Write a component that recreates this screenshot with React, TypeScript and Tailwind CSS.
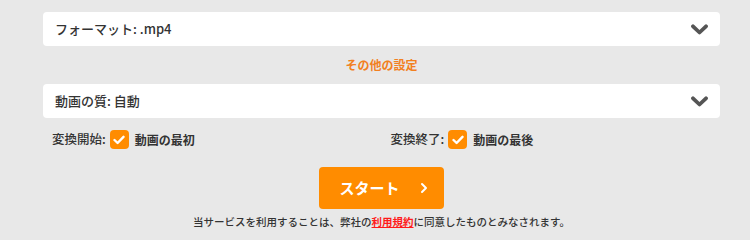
import { useState } from "react";

function Chevron() {
  return (
    <svg width="17" height="11" viewBox="0 0 17 11" className="text-[#555]">
      <path d="M2 2.3 L8.5 8.5 L15 2.3" fill="none" stroke="currentColor" strokeWidth="3.8" strokeLinecap="round" strokeLinejoin="round" />
    </svg>
  );
}

function SelectBox({ label }: { label: string }) {
  return (
    <div className="h-[34px] bg-white rounded-[4px] flex items-center justify-between pl-[12px] pr-[12px] cursor-pointer">
      <span className="text-[13px] text-[#333] font-medium">{label}</span>
      <Chevron />
    </div>
  );
}

function CheckItem({ title, label }: { title: string; label: string }) {
  const [checked, setChecked] = useState(true);
  return (
    <div className="flex items-center gap-[4px] px-[9px]">
      <span className="text-[12.5px] text-[#333] font-medium">{title}</span>
      <button
        onClick={() => setChecked(!checked)}
        className="w-[19px] h-[19px] rounded-[4px] bg-[#ff8c00] flex items-center justify-center"
      >
        {checked && (
          <svg width="12" height="10" viewBox="0 0 12 10">
            <path d="M1.5 5 L4.6 8 L10.5 1.8" fill="none" stroke="white" strokeWidth="2.4" strokeLinecap="round" strokeLinejoin="round" />
          </svg>
        )}
      </button>
      <span className="text-[12px] text-[#333] font-bold ml-[2px]">{label}</span>
    </div>
  );
}

export default function App() {
  return (
    <div
      className="w-[750px] h-[240px] bg-[#e8e8e8] pt-[12px] pl-[43px] pr-[30px]"
      style={{ fontFamily: '"Noto Sans CJK JP", "Noto Sans", sans-serif' }}
    >
      <SelectBox label="フォーマット: .mp4" />
      <div className="h-[38px] flex items-center justify-center">
        <span className="text-[12px] font-bold text-[#f2801f]">その他の設定</span>
      </div>
      <SelectBox label="動画の質: 自動" />
      <div className="grid grid-cols-2 mt-[12px] h-[18px] items-center">
        <CheckItem title="変換開始:" label="動画の最初" />
        <CheckItem title="変換終了:" label="動画の最後" />
      </div>
      <div className="flex justify-center mt-[19px]">
        <button className="w-[125px] h-[42px] bg-[#ff8c00] rounded-[4px] flex items-center justify-center text-white">
          <span className="text-[15px] font-bold ml-[4px]">スタート</span>
          <span className="ml-[20px]">
            <svg width="8" height="12" viewBox="0 0 8 12">
              <path d="M2 2 L6 6 L2 10" fill="none" stroke="white" strokeWidth="2" strokeLinecap="round" strokeLinejoin="round" />
            </svg>
          </span>
        </button>
      </div>
      <p className="text-center text-[10.5px] text-[#333] font-medium mt-[5px]">
        当サービスを利用することは、弊社の
        <a className="text-[#ff1a1a] font-bold underline">利用規約</a>
        に同意したものとみなされます。
      </p>
    </div>
  );
}
